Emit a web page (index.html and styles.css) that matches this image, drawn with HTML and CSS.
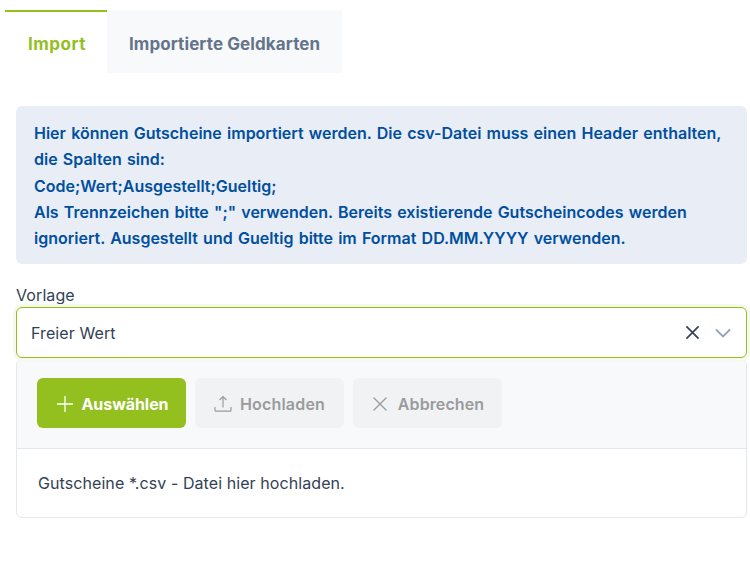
FILE: index.html
```html
<!DOCTYPE html>
<html lang="de">
<head>
<meta charset="utf-8">
<title>Import</title>
<link rel="stylesheet" href="styles.css">
</head>
<body>
<div class="page">
  <div class="tabs">
    <div class="tab tab-active">Import</div>
    <div class="tab">Importierte Geldkarten</div>
  </div>
  <div class="panel">
    <div class="message">Hier können Gutscheine importiert werden. Die csv-Datei muss einen Header enthalten, die Spalten sind:<br>Code;Wert;Ausgestellt;Gueltig;<br>Als Trennzeichen bitte ";" verwenden. Bereits existierende Gutscheincodes werden ignoriert. Ausgestellt und Gueltig bitte im Format DD.MM.YYYY verwenden.</div>
    <label class="label">Vorlage</label>
    <div class="select">
      <span class="select-value">Freier Wert</span>
      <svg class="icon-clear" width="15" height="15" viewBox="0 0 16 16"><path d="M1.500 1.500l13 13M14.500 1.500l-13 13" fill="none" stroke="#334155" stroke-width="1.8"/></svg>
      <svg class="icon-chevron" width="16" height="10" viewBox="0 0 16 10"><path d="M1 1.500l7 7 7-7" fill="none" stroke="#94a3b8" stroke-width="1.8"/></svg>
    </div>
    <div class="upload">
      <div class="toolbar">
        <div class="btn btn-primary">
          <svg width="18" height="18" viewBox="0 0 18 18"><path d="M9 1v16M1 9h16" fill="none" stroke="#fff" stroke-width="1.3"/></svg>
          <span>Auswählen</span>
        </div>
        <div class="btn btn-disabled">
          <svg width="18" height="18" viewBox="0 0 18 18"><path d="M9 12.500V1.500M5.500 5L9 1.500 12.500 5M1 12v3.200c0 .6.4 1 1 1h14c.6 0 1-.4 1-1V12" fill="none" stroke="#9a9b9d" stroke-width="1.2"/></svg>
          <span>Hochladen</span>
        </div>
        <div class="btn btn-disabled">
          <svg width="18" height="18" viewBox="0 0 18 18"><path d="M2.500 2.500l13 13M15.500 2.500l-13 13" fill="none" stroke="#9a9b9d" stroke-width="1.3"/></svg>
          <span class="btn-label-tight">Abbrechen</span>
        </div>
      </div>
      <div class="drop">Gutscheine *.csv - Datei hier hochladen.</div>
    </div>
  </div>
</div>
</body>
</html>
```
FILE: styles.css
```css
* { box-sizing: border-box; }
html, body { margin: 0; padding: 0; background: #fff; }
body {
  font-family: Inter, "Liberation Sans", sans-serif;
  font-size: 16px;
  color: #334155;
  width: 750px;
  height: 575px;
  overflow: hidden;
}
.page { padding: 10px 3px 0 5px; }
.tabs { display: flex; height: 63px; }
.tab {
  display: flex;
  align-items: center;
  padding: 4px 22px 0;
  background: #f8f9fb;
  color: #64748b;
  font-size: 17px;
  font-weight: 700;
  letter-spacing: .1px;
}
.tab-active {
  padding: 2px 21px 0 23px;
  background: #fff;
  color: #93c01f;
  border-top: 2px solid #93c01f;
  letter-spacing: .5px;
}
.panel { padding: 33px 0 0 11px; }
.message {
  height: 158px;
  padding: 14px 18px;
  background: #e9edf5;
  border-radius: 6px;
  color: #004f9f;
  font-weight: 600;
  line-height: 26.250px;
  word-spacing: 1.200px;
}
.label { display: block; margin-top: 21px; height: 22px; line-height: 20px; letter-spacing: .1px; }
.select {
  display: flex;
  align-items: center;
  height: 51px;
  padding: 0 15px 0 14px;
  background: #fff;
  border: 1px solid #93c01f;
  border-radius: 6px;
  box-shadow: 0 0 0 3px #f6faec;
  position: relative;
  letter-spacing: .1px;
}
.select-value { flex: 1; }
.icon-clear { margin-right: 15px; }
.upload { margin-top: 1px; border: 1px solid #e2e8f0; border-radius: 6px; }
.toolbar {
  display: flex;
  gap: 9px;
  height: 89px;
  padding: 18px 20px;
  background: #f8f9fb;
  border-bottom: 1px solid #e2e8f0;
  border-radius: 6px 6px 0 0;
}
.btn {
  display: flex;
  align-items: center;
  justify-content: center;
  gap: 8px;
  width: 149px;
  height: 50px;
  padding-top: 1px;
  border-radius: 6px;
  font-weight: 700;
}
.btn-primary { background: #93c01f; color: #fff; gap: 7px; padding-left: 2px; letter-spacing: -.05px; }
.btn-disabled { background: #f1f2f4; color: #9a9b9d; font-weight: 600; letter-spacing: .2px; }
.btn-label-tight { margin-left: 1px; letter-spacing: .1px; }
.drop { height: 68px; padding: 22px 21px 0; line-height: 24px; letter-spacing: .08px; }
```
